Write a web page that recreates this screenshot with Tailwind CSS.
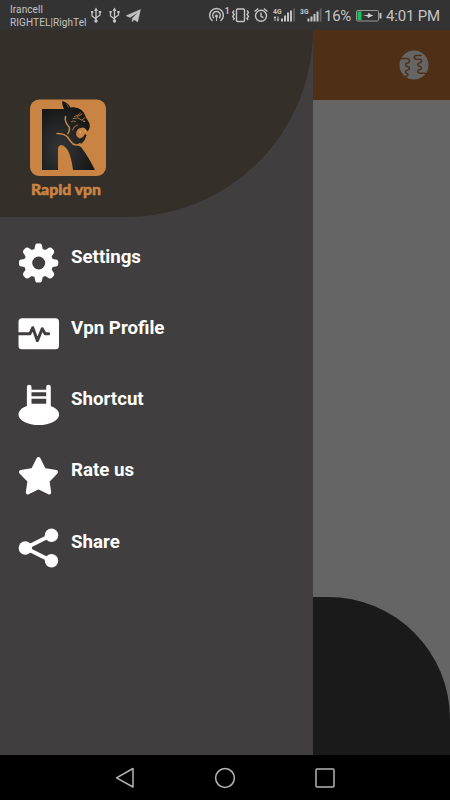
<!DOCTYPE html>
<html lang="en">
<head>
<meta charset="utf-8">
<meta name="viewport" content="width=device-width, initial-scale=1">
<title>Rapid vpn</title>
<script src="https://cdn.jsdelivr.net/npm/@tailwindcss/browser@4"></script>
</head>
<body class="bg-black">
<div class="flex h-[800px] w-[450px] flex-col overflow-hidden font-['Roboto','Liberation_Sans',sans-serif]">

  <!-- Status bar -->
  <header class="flex h-[30px] shrink-0 items-center bg-[#333333] text-[#c4c4c4]">
    <div class="ml-[10px] w-[80px] whitespace-nowrap pt-[2px] text-[10px] leading-[13.500px] tracking-[0.1px]">
      <div>Irancell</div>
      <div>RIGHTEL|RighTel</div>
    </div>
    <svg class="h-[30px] w-[52px]" viewBox="90 0 52 30" fill="none" stroke="#c4c4c4" stroke-width="1.3">
      <g id="usb"><path d="M96 10v11M92 13v3l4 3M100 13v2l-4 3"/><path d="M96 7.500l2 3.500h-4z" fill="#c4c4c4" stroke="none"/><circle cx="96" cy="21" r="1.700" fill="#c4c4c4" stroke="none"/><path d="M91 12h2.200M98.800 12h2.400" stroke-width="2"/></g>
      <use href="#usb" x="18.500"/>
      <path d="M140.500 9.500L126 15.800l4.200 1.700 8-5.600-5.800 6.400-.4 3.400 2.100-2 3.600 2.200z" fill="#c4c4c4" stroke="#c4c4c4" stroke-width=".4"/>
    </svg>
    <svg class="ml-[65px] h-[30px] w-[117px]" viewBox="207 0 117 30" fill="none" stroke="#c4c4c4" stroke-width="1.400">
      <path d="M212.500 21a6.900 6.900 0 1 1 8 0M214 18.200a3.800 3.800 0 1 1 5 0"/>
      <circle cx="216.500" cy="16" r="1.500" fill="#c4c4c4" stroke="none"/><path d="M216.500 16v5" stroke-width="1"/>
      <text x="224.800" y="14" font-family="Roboto, sans-serif" font-size="8.500" font-weight="700" fill="#c4c4c4" stroke="none">1</text>
      <rect x="236.500" y="9" width="8" height="12.500" rx="1"/>
      <path d="M234.200 10.500l-1.500 2 1.500 2-1.500 2 1.500 2-1 1.500M247 10.500l1.500 2-1.500 2 1.500 2-1.500 2 1 1.500"/>
      <circle cx="261" cy="15.800" r="5.500"/><path d="M261 12.500v3.800l2.500 1.300M254.500 11.500l3.700-3M267.500 11.500l-3.700-3"/>
      <g fill="#c4c4c4" stroke="none">
        <text x="273" y="13.800" font-family="Roboto, sans-serif" font-weight="700" font-size="7.500" textLength="8.500" lengthAdjust="spacingAndGlyphs">4G</text>
        <path d="M275 16l1.500 2h-1v3h-1v-3h-1zM278 21.500l-1.500-2h1v-3h1v3h1zM281 18.500h2v3h-2zM284 15.500h2v6h-2zM287 12.500h2v9h-2zM290 10.500h2v11h-2z"/>
        <path d="M293.300 8.500h1.600v13h-1.600z" fill="#666"/>
        <text x="300" y="13.800" font-family="Roboto, sans-serif" font-weight="700" font-size="7.500" textLength="8.500" lengthAdjust="spacingAndGlyphs">3G</text>
        <path d="M307.500 18.500h2v3h-2zM310.500 16.500h2v5h-2zM313.500 14h2v7.500h-2zM316.500 11.500h2v10h-2z"/>
        <path d="M319.700 8.500h1.800v13h-1.800z" fill="#666"/>
      </g>
    </svg>
    <span class="w-[32px] whitespace-nowrap pt-[2px] text-[15px] leading-[18px] tracking-[-0.3px]">16%</span>
    <svg class="h-[30px] w-[26px]" viewBox="356 0 26 30" fill="none">
      <rect x="356.500" y="10.500" width="22" height="10.500" rx="1.200" stroke="#999"/>
      <path d="M357.500 11.500h4v8.500h-4z" fill="#16c45a"/><path d="M379.500 13h2v5.500h-2z" fill="#c4c4c4"/>
      <path d="M363 15.500l5-.7.500-2 2.500 2 2.500.5-5.500 2.700-.6-1.700z" fill="#d0d0d0"/>
    </svg>
    <span class="ml-[4px] whitespace-nowrap pt-[2px] text-[15px] leading-[18px] tracking-[-0.200px]">4:01 PM</span>
  </header>

  <div class="flex h-[725px] shrink-0">
    <!-- Navigation drawer -->
    <aside class="w-[312.500px] shrink-0 bg-[#403e3f]">
      <div class="h-[187px] rounded-br-[187px] bg-[#352f2a] pl-[30px] pt-[69px]">
        <svg class="h-[100px] w-[78px]" viewBox="30 99 78 100">
          <defs><radialGradient id="coat" cx=".35" cy=".7" r=".7"><stop stop-color="#343639"/><stop offset="1" stop-color="#141413"/></radialGradient></defs>
          <rect x="30" y="99.500" width="76" height="76.500" rx="9" fill="#c98443"/>
          <path d="M42 109H64Q61.500 104 62.500 101Q68 102.500 70.500 107.500Q77 106.500 81.500 110Q85 113 86 117.500L89.500 123.500Q90.300 127 89 129.500L87 131.500Q85.500 127.500 82.500 127.500L79 128.500Q75 131 76.500 136L79.500 138.500Q83 138 85 134L86.500 135Q85.500 140 81.500 143.500L77 145L81 147Q88 156 95 170H73Q70 146 61 145Q58 146 58 149V170H42z" fill="url(#coat)"/>
          <g fill="none" stroke="#c98443" stroke-linecap="round">
            <path d="M57 133.500q7 0 10.500 3.500q2.500 4 5.500 7q4 2 7-.5" stroke-width="1.500"/>
            <path d="M65.500 116.500q-1 5 2.500 9q3 3 0 8" stroke-width="1.500"/>
            <path d="M73 118.500q5-2 9 1.500M74.500 116.500q4-1 6-3.500M77 116.500q3-.5 5-2.500M82 120l3-2.500M71.500 121.500q2-1 4 0M72.500 130q1-4 5-5" stroke-width=".8"/>
          </g>
          <path d="M82.500 120.500l3 .5-1.500 1zM79 131l1.500 3 1-3zM84.500 130l1 3 1-2.500z" fill="#e0a66d"/>
          <path d="M66 103.500q2 1.500 2.500 4" fill="none" stroke="#796044" stroke-width=".8"/>
          <text x="31" y="194.500" font-family="Lato, sans-serif" font-size="15" font-weight="900" textLength="70" lengthAdjust="spacingAndGlyphs" fill="#c98443" stroke="#c98443" stroke-width=".5">Rapid vpn</text>
        </svg>
      </div>
      <nav class="flex flex-col pt-[10px] text-[18.700px] font-bold leading-[24px] text-white">
        <div class="flex h-[71.250px] items-center gap-[12px] pl-[18px]">
          <svg class="h-[42px] w-[41px]" viewBox="18 241.500 41 42"><path fill="#fff" fill-rule="evenodd" d="M36.500 243h4l1.400 1.200.8 4.300 2.600 1.100 4-2.500 2.200.2 2.500 2.600.2 2-2.600 4 1.100 2.600 4.300.8 1.200 1.200v4l-1.200 1.200-4.300.8-1.100 2.600 2.600 4-.2 2-2.500 2.600-2.200.2-4-2.500-2.600 1.100-.8 4.300-1.400 1.200h-4l-1.200-1.200-.8-4.300-2.600-1.100-4 2.500-2.200-.2-2.500-2.600-.2-2 2.600-4-1.100-2.600-4.300-.8-1.200-1.200v-4l1.200-1.200 4.300-.8 1.100-2.600-2.600-4 .2-2 2.500-2.600 2.200-.2 4 2.500 2.600-1.100.8-4.300zM38.700 256a6.500 6.500 0 1 0 0 13a6.500 6.500 0 1 0 0-13z"/></svg>
          <span class="mb-[12px]">Settings</span>
        </div>
        <div class="flex h-[71.250px] items-center gap-[12px] pl-[18px]">
          <svg class="h-[42px] w-[41px]" viewBox="18 313 41 42"><rect x="18.500" y="318.300" width="40.500" height="31" rx="3.500" fill="#fff"/><path d="M18 333.700h12l2.800-6 4.600 13 4.800-12 3 5h3.500" fill="none" stroke="#403e3f" stroke-width="3" stroke-linecap="round" stroke-linejoin="round"/></svg>
          <span class="mb-[12px]">Vpn Profile</span>
        </div>
        <div class="flex h-[71.250px] items-center gap-[12px] pl-[18px]">
          <svg class="h-[42px] w-[41px]" viewBox="18 384 41 42"><ellipse cx="38.800" cy="414.500" rx="20.300" ry="10.500" fill="#fff"/><path d="M29.200 387v20M48.500 387v20" stroke="#fff" stroke-width="4.600" stroke-linecap="round"/><path d="M29 391h20M29 397.500h20M29 405h20" stroke="#fff" stroke-width="2.500"/></svg>
          <span class="mb-[12px]">Shortcut</span>
        </div>
        <div class="flex h-[71.250px] items-center gap-[12px] pl-[18px]">
          <svg class="h-[42px] w-[41px]" viewBox="18 455.500 41 42"><path d="M38.500 459.500l5.500 11 12 2-8.500 8.800 1.700 11.700-10.700-5.200L27.800 493l1.700-11.700-8.500-8.800 12-2z" fill="#fff" stroke="#fff" stroke-width="4" stroke-linejoin="round"/></svg>
          <span class="mb-[12px]">Rate us</span>
        </div>
        <div class="flex h-[71.250px] items-center gap-[12px] pl-[18px]">
          <svg class="h-[42px] w-[41px]" viewBox="18 526.500 41 42"><path d="M51.500 534.500l-26 13 26 13" fill="none" stroke="#fff" stroke-width="4"/><circle cx="51.500" cy="534.700" r="6.700" fill="#fff"/><circle cx="25.300" cy="547.500" r="6.700" fill="#fff"/><circle cx="51.500" cy="560.300" r="6.700" fill="#fff"/></svg>
          <span class="mb-[12px]">Share</span>
        </div>
      </nav>
    </aside>

    <!-- Dimmed screen behind the drawer -->
    <main class="flex w-[137.500px] flex-col bg-[#656565]">
      <div class="flex h-[70px] items-center justify-end bg-[#4f3016] pr-[21px]">
        <svg class="h-[30px] w-[30px]" viewBox="0 0 30 30"><circle cx="15" cy="15" r="14.500" fill="#656565"/><path d="M1 8.500H7.500C11 8.500 11.500 12.500 8.500 13C6 13.300 6 16.300 8.500 16.500C11 16.700 11 19.800 8.500 20C6 20.300 6 23 8 23.500C9.500 24 9.500 26 6.500 26.500M22 5.500H17.500C14.500 5.500 14.500 9 17.500 9.200H20.500C23.500 9.500 23 12.500 20.500 13C18 13.500 18.500 16 20.500 16.200C23 16.500 23 19.500 20.500 19.700C18 20 18.500 23 20.500 23.300H26" fill="none" stroke="#4f3016" stroke-width="1.600" stroke-linecap="round"/></svg>
      </div>
      <div class="mt-auto h-[158.500px] rounded-tr-[122px] bg-[#1a1a1a]"></div>
    </main>
  </div>

  <!-- System navigation -->
  <footer class="flex h-[45px] shrink-0 items-center justify-center gap-[78px] bg-black">
    <svg class="h-[22px] w-[22px]" viewBox="0 0 22 22" fill="none" stroke="#b5b5b5" stroke-width="1.500" stroke-linejoin="round"><path d="M19 1.500v18.500L2.500 10.800z"/></svg>
    <svg class="h-[22px] w-[22px]" viewBox="0 0 22 22" fill="none" stroke="#b5b5b5" stroke-width="1.500"><circle cx="11" cy="11" r="9.400"/></svg>
    <svg class="h-[22px] w-[22px]" viewBox="0 0 22 22" fill="none" stroke="#b5b5b5" stroke-width="1.500"><rect x="2" y="2" width="18" height="18" rx="1"/></svg>
  </footer>
</div>
</body>
</html>
